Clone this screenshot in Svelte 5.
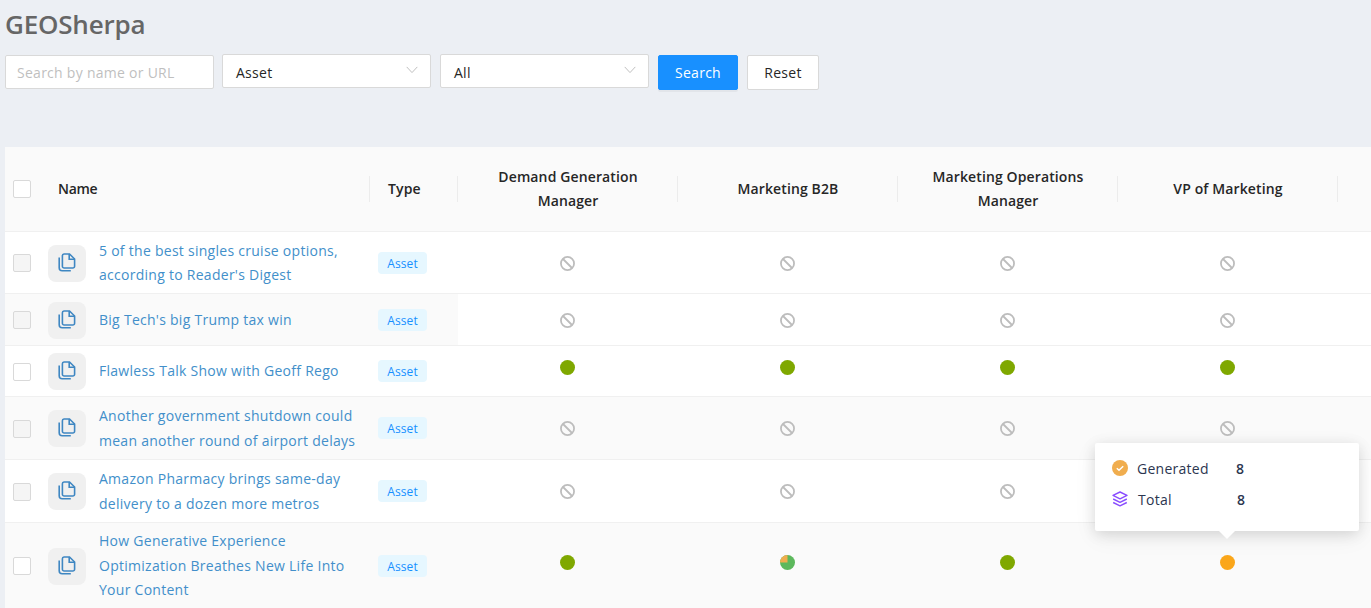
<script>
  const cols = ['Demand Generation Manager', 'Marketing B2B', 'Marketing Operations Manager', 'VP of Marketing'];
  const rows = [
    { name: ['5 of the best singles cruise options,', "according to Reader's Digest"], h: 62, off: true, cells: ['ban','ban','ban','ban'], cls: '' },
    { name: ["Big Tech's big Trump tax win"], h: 52, off: true, cells: ['ban','ban','ban','ban'], cls: 'part' },
    { name: ['Flawless Talk Show with Geoff Rego'], h: 51, off: false, cells: ['ok','ok','ok','ok'], cls: '' },
    { name: ['Another government shutdown could', 'mean another round of airport delays'], h: 63, off: true, cells: ['ban','ban','ban','ban'], cls: 'alt' },
    { name: ['Amazon Pharmacy brings same-day', 'delivery to a dozen more metros'], h: 63, off: true, cells: ['ban','ban','ban','ban'], cls: '' },
    { name: ['How Generative Experience', 'Optimization Breathes New Life Into', 'Your Content'], h: 86, off: false, cells: ['ok','pie','ok','warn'], cls: 'alt' }
  ];
</script>

<div class="page">
  <h1>GEOSherpa</h1>
  <div class="filters">
    <input class="search" placeholder="Search by name or URL" />
    <div class="select"><span>Asset</span><svg viewBox="0 0 12 8" width="12" height="8"><path d="M.7.9 6 6.6 11.3.9" fill="none" stroke="#bfbfbf" stroke-width="1"/></svg></div>
    <div class="select"><span>All</span><svg viewBox="0 0 12 8" width="12" height="8"><path d="M.7.9 6 6.6 11.3.9" fill="none" stroke="#bfbfbf" stroke-width="1"/></svg></div>
    <button class="btn primary">Search</button>
    <button class="btn reset">Reset</button>
  </div>

  <table>
    <colgroup>
      <col class="c-check" /><col class="c-name" /><col class="c-type" />
      <col class="c-val" /><col class="c-val" /><col class="c-val" /><col class="c-val" /><col />
    </colgroup>
    <thead>
      <tr>
        <th class="tick"><span class="box"></span></th>
        <th class="left"><span class="sep name">Name</span></th>
        <th class="left type-head"><span class="sep">Type</span></th>
        {#each cols as c}
          <th><span class="sep val">{c}</span></th>
        {/each}
        <th></th>
      </tr>
    </thead>
    <tbody>
      {#each rows as r}
        <tr class={r.cls} style="height:{r.h}px">
          <td class="tick first"><span class="box" class:off={r.off}></span></td>
          <td class="first">
            <div class="asset">
              <span class="thumb">
                <svg viewBox="0 0 18 19" width="18" height="19" fill="none" stroke="#3f87c2" stroke-width="1.6">
                  <path d="M6 1h5.5L16.6 6v7.2a1.8 1.8 0 0 1-1.8 1.8H6.2a1.8 1.8 0 0 1-1.8-1.8V2.8A1.8 1.8 0 0 1 6 1Z"/>
                  <path d="M11.2 1v5.2h5.4"/>
                  <path d="M1.2 4.5v10.3a3 3 0 0 0 3 3h8.6"/>
                </svg>
              </span>
              <a href="#top">{#each r.name as l}<span class="line">{l}</span>{/each}</a>
            </div>
          </td>
          <td class="first"><span class="tag">Asset</span></td>
          {#each r.cells as c}
            <td class="status">
              {#if c === 'ban'}
                <svg class="icon" viewBox="0 0 16 16" width="15" height="15" fill="none" stroke="#bdbdbd" stroke-width="1.9"><circle cx="8" cy="8" r="7"/><path d="M3.2 3.2l9.6 9.6"/></svg>
              {:else if c === 'pie'}
                <svg class="icon raised" viewBox="0 0 16 16" width="15" height="15"><circle cx="8" cy="8" r="8" fill="#5cb85c"/><path d="M8 8V0A8 8 0 0 0 0 8Z" fill="#f0ad4e"/></svg>
              {:else}
                <span class="dot raised {c}"></span>
              {/if}
            </td>
          {/each}
          <td></td>
        </tr>
      {/each}
    </tbody>
  </table>

  <div class="tip">
    <div class="tip-row">
      <svg viewBox="0 0 16 16" width="16" height="16"><circle cx="8" cy="8" r="8" fill="#f0ad4e"/><path d="M4.8 8.2 7 10.2l4.2-4" fill="none" stroke="#fff" stroke-width="1.5"/></svg>
      <span class="lab">Generated</span><b>8</b>
    </div>
    <div class="tip-row second">
      <svg viewBox="0 0 16 16" width="16" height="16" fill="none" stroke="#8a4dff" stroke-width="1.4" stroke-linejoin="round"><path d="M8 1 15 4.4 8 7.8 1 4.4Z"/><path d="M1.2 8 8 11.3 14.8 8"/><path d="M1.2 11.5 8 14.8l6.8-3.3"/></svg>
      <span class="lab">Total</span><b>8</b>
    </div>
    <i class="arrow"></i>
  </div>
</div>

<style>
  :global(body) { margin: 0; background: #eceff4; overflow: hidden; }
  .page { position: relative; height: 608px; overflow: hidden; padding-left: 5px; box-sizing: border-box; font-family: "Open Sans", "Noto Sans", sans-serif; font-size: 14px; letter-spacing: .27px; color: #262626; }
  h1 { margin: 0; padding-top: 5px; height: 54px; box-sizing: border-box; font-size: 26px; line-height: 38px; font-weight: 600; color: #666; letter-spacing: -0.2px; }
  .filters { display: flex; align-items: center; gap: 9px; height: 36px; }
  .search, .select { width: 209px; height: 34px; box-sizing: border-box; border: 1px solid #d9d9d9; border-radius: 2px; background: #fff; font: inherit; letter-spacing: inherit; }
  .search { margin-right: -1px; padding: 0 11px; outline: none; }
  .search::placeholder { color: #bfbfbf; opacity: 1; }
  .select { margin-top: -2px; display: flex; align-items: center; justify-content: space-between; padding: 0 12px 0 13px; }
  .select span { margin-top: 2px; }
  .select svg { margin-top: -3px; }
  .btn { height: 35px; padding: 0; border: 1px solid #d9d9d9; border-radius: 2px; background: #fff; font: inherit; letter-spacing: inherit; color: #262626; box-sizing: border-box; }
  .reset { width: 72px; }
  .primary { width: 80px; border-color: #1890ff; background: #1890ff; color: #fff; box-shadow: 0 2px 0 rgba(0,0,0,.04); }
  table { margin-top: 57px; width: 1366px; table-layout: fixed; border-collapse: collapse; background: #fff; }
  .c-check { width: 43px; }
  .c-name { width: 322px; }
  .c-type { width: 88px; }
  .c-val { width: 220px; }
  th { height: 84px; padding: 0; background: #fafafa; border-bottom: 1px solid #f0f0f0; font-weight: 600; letter-spacing: .12px; text-align: center; line-height: 24px; }
  th.left { text-align: left; padding-left: 10px; }
  th.type-head { padding-left: 18px; }
  .sep { display: flex; align-items: center; justify-content: center; min-height: 24px; position: relative; }
  .sep.name { letter-spacing: -.3px; }
  .left .sep { justify-content: flex-start; }
  .sep.val { padding: 0 20px; }
  th:nth-child(n+2):nth-child(-n+7) { position: relative; }
  th:nth-child(n+2):nth-child(-n+7)::after { content: ""; position: absolute; right: 0; top: 29px; height: 26px; width: 1px; background: #ececec; }
  td { padding: 1px 0 0; border-bottom: 1px solid #f0f0f0; line-height: 24.5px; }
  tr.alt td, tr.part td.first { background: #fafafa; }
  .tick { text-align: left; padding-left: 8px; }
  .box { display: block; width: 18px; height: 18px; box-sizing: border-box; border: 1px solid #d9d9d9; border-radius: 2px; background: #fff; }
  .box.off { background: #f5f5f5; }
  .asset { display: flex; align-items: center; gap: 13px; }
  .thumb { flex: none; width: 38px; height: 37px; border-radius: 8px; background: #f0f0f0; display: flex; align-items: center; justify-content: center; padding-bottom: 2px; box-sizing: border-box; }
  a { color: #428fca; text-decoration: none; }
  .line { display: block; white-space: nowrap; }
  .tag { display: inline-block; margin-left: 8px; width: 49px; height: 22px; line-height: 23px; text-align: center; border-radius: 4px; background: #e6f7ff; color: #1890ff; font-size: 12px; letter-spacing: .1px; }
  .icon, .dot { display: block; margin-left: 102px; }
  .raised { margin-top: -8px; }
  .dot { width: 15px; height: 15px; border-radius: 50%; }
  .ok { background: #7fa800; }
  .warn { background: #faa61a; }
  .tip { position: absolute; left: 1095px; top: 443px; width: 264px; height: 88px; box-sizing: border-box; padding: 13px 17px; background: #fff; border-radius: 2px; box-shadow: 0 3px 14px rgba(0,0,0,.12), 0 6px 24px rgba(0,0,0,.06); }
  .tip-row { display: flex; align-items: center; height: 24px; }
  .tip-row.second { margin-top: 7px; }
  .lab { margin-left: 9px; width: 99px; color: #2c3650; }
  .second .lab { margin-left: 10px; }
  .tip b { font-weight: 600; color: #2c3650; }
  .arrow { position: absolute; left: 124px; bottom: -8px; width: 0; height: 0; border: 8px solid transparent; border-bottom: 0; border-top-color: #fff; }
</style>
